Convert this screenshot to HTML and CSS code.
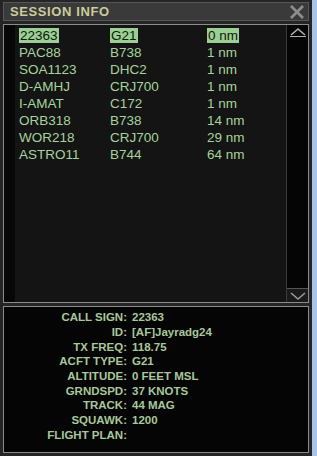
FILE: index.html
```html
<!DOCTYPE html>
<html lang="en">
<head>
    <meta charset="UTF-8">
    <meta name="viewport" content="width=device-width, initial-scale=1.0">
    <title>Session Info</title>
    <link rel="stylesheet" href="styles.css">
</head>
<body>
    <div class="window">
        <div class="titlebar">
            <span class="title">SESSION INFO</span>
            <svg class="close" width="16" height="14" viewBox="0 0 16 14">
                <path d="M2 1 L14 13 M14 1 L2 13" stroke="#8e8e8e" stroke-width="2.6" fill="none"/>
            </svg>
        </div>

        <!-- Traffic list -->
        <div class="list">
            <div class="gutter"></div>
            <div class="rows">
                <div class="row">
                    <span class="cs"><b class="sel">22363</b></span>
                    <span class="type"><b class="sel">G21</b></span>
                    <span class="dist"><b class="sel">0 nm</b></span>
                </div>
                <div class="row"><span class="cs">PAC88</span><span class="type">B738</span><span class="dist">1 nm</span></div>
                <div class="row"><span class="cs">SOA1123</span><span class="type">DHC2</span><span class="dist">1 nm</span></div>
                <div class="row"><span class="cs">D-AMHJ</span><span class="type">CRJ700</span><span class="dist">1 nm</span></div>
                <div class="row"><span class="cs">I-AMAT</span><span class="type">C172</span><span class="dist">1 nm</span></div>
                <div class="row"><span class="cs">ORB318</span><span class="type">B738</span><span class="dist">14 nm</span></div>
                <div class="row"><span class="cs">WOR218</span><span class="type">CRJ700</span><span class="dist">29 nm</span></div>
                <div class="row"><span class="cs">ASTRO11</span><span class="type">B744</span><span class="dist">64 nm</span></div>
            </div>
            <div class="scrollbar">
                <div class="arrow up">
                    <svg width="18" height="10" viewBox="0 0 18 10">
                        <path d="M2 8 L9 2 L16 8" stroke="#b0b0b0" stroke-width="1.6" fill="none"/>
                        <path d="M1 9.5 H17" stroke="#b0b0b0" stroke-width="1"/>
                    </svg>
                </div>
                <div class="track"></div>
                <div class="arrow down">
                    <svg width="18" height="10" viewBox="0 0 18 10">
                        <path d="M2 2 L9 8 L16 2" stroke="#9a9a9a" stroke-width="1.6" fill="none"/>
                    </svg>
                </div>
            </div>
        </div>

        <!-- Selected aircraft details -->
        <div class="info">
            <div class="line"><span class="label">CALL SIGN:</span><span class="value">22363</span></div>
            <div class="line"><span class="label">ID:</span><span class="value">[AF]Jayradg24</span></div>
            <div class="line"><span class="label">TX FREQ:</span><span class="value">118.75</span></div>
            <div class="line"><span class="label">ACFT TYPE:</span><span class="value">G21</span></div>
            <div class="line"><span class="label">ALTITUDE:</span><span class="value">0 FEET MSL</span></div>
            <div class="line"><span class="label">GRNDSPD:</span><span class="value">37 KNOTS</span></div>
            <div class="line"><span class="label">TRACK:</span><span class="value">44 MAG</span></div>
            <div class="line"><span class="label">SQUAWK:</span><span class="value">1200</span></div>
            <div class="line"><span class="label">FLIGHT PLAN:</span><span class="value"></span></div>
        </div>
    </div>
</body>
</html>
```

FILE: styles.css
```css
* {
    box-sizing: border-box;
    margin: 0;
    padding: 0;
}

body {
    background: #a9c4e4;
    font-family: 'Liberation Sans', Arial, sans-serif;
    width: 317px;
    height: 456px;
    overflow: hidden;
}

.window {
    width: 312px;
    height: 456px;
    background: #252525;
    padding: 2px 3px 3px 3px;
    display: flex;
    flex-direction: column;
}

.titlebar {
    height: 19px;
    background: #3a3a3a;
    border: 1px solid #575757;
    display: flex;
    align-items: center;
    justify-content: space-between;
    padding: 0 3px 0 6px;
}

.title {
    color: #c9cc9c;
    font-size: 13px;
    font-weight: bold;
    letter-spacing: 0.6px;
}

.close {
    display: block;
}

.list {
    margin-top: 3px;
    height: 279px;
    border: 1px solid #8c8c8c;
    background: #141414;
    display: flex;
}

.gutter {
    width: 11px;
    background: #070707;
}

.rows {
    flex: 1;
    padding-top: 2px;
}

.row {
    display: flex;
    height: 17px;
    align-items: center;
    color: #a6d39d;
    font-size: 13.5px;
}

.cs {
    width: 95px;
    padding-left: 4px;
}

.type {
    width: 97px;
}

.dist {
    flex: 1;
}

.sel {
    font-weight: normal;
    background: #9ccf93;
    color: #0c1a0c;
    padding: 0 1px;
}

.scrollbar {
    width: 22px;
    background: #050505;
    border-left: 1px solid #3a3a3a;
    display: flex;
    flex-direction: column;
}

.arrow {
    height: 14px;
    display: flex;
    align-items: center;
    justify-content: center;
}

.track {
    flex: 1;
}

.arrow.down {
    border-top: 1px solid #555;
    background: #1a1a1a;
}

.info {
    margin-top: 3px;
    flex: 1;
    border: 1px solid #8c8c8c;
    background: #050505;
    padding-top: 3px;
}

.line {
    display: flex;
    height: 14.7px;
    align-items: center;
    color: #a9c79c;
    font-size: 11.5px;
    font-weight: bold;
}

.label {
    width: 123px;
    text-align: right;
}

.value {
    padding-left: 5px;
}
```
